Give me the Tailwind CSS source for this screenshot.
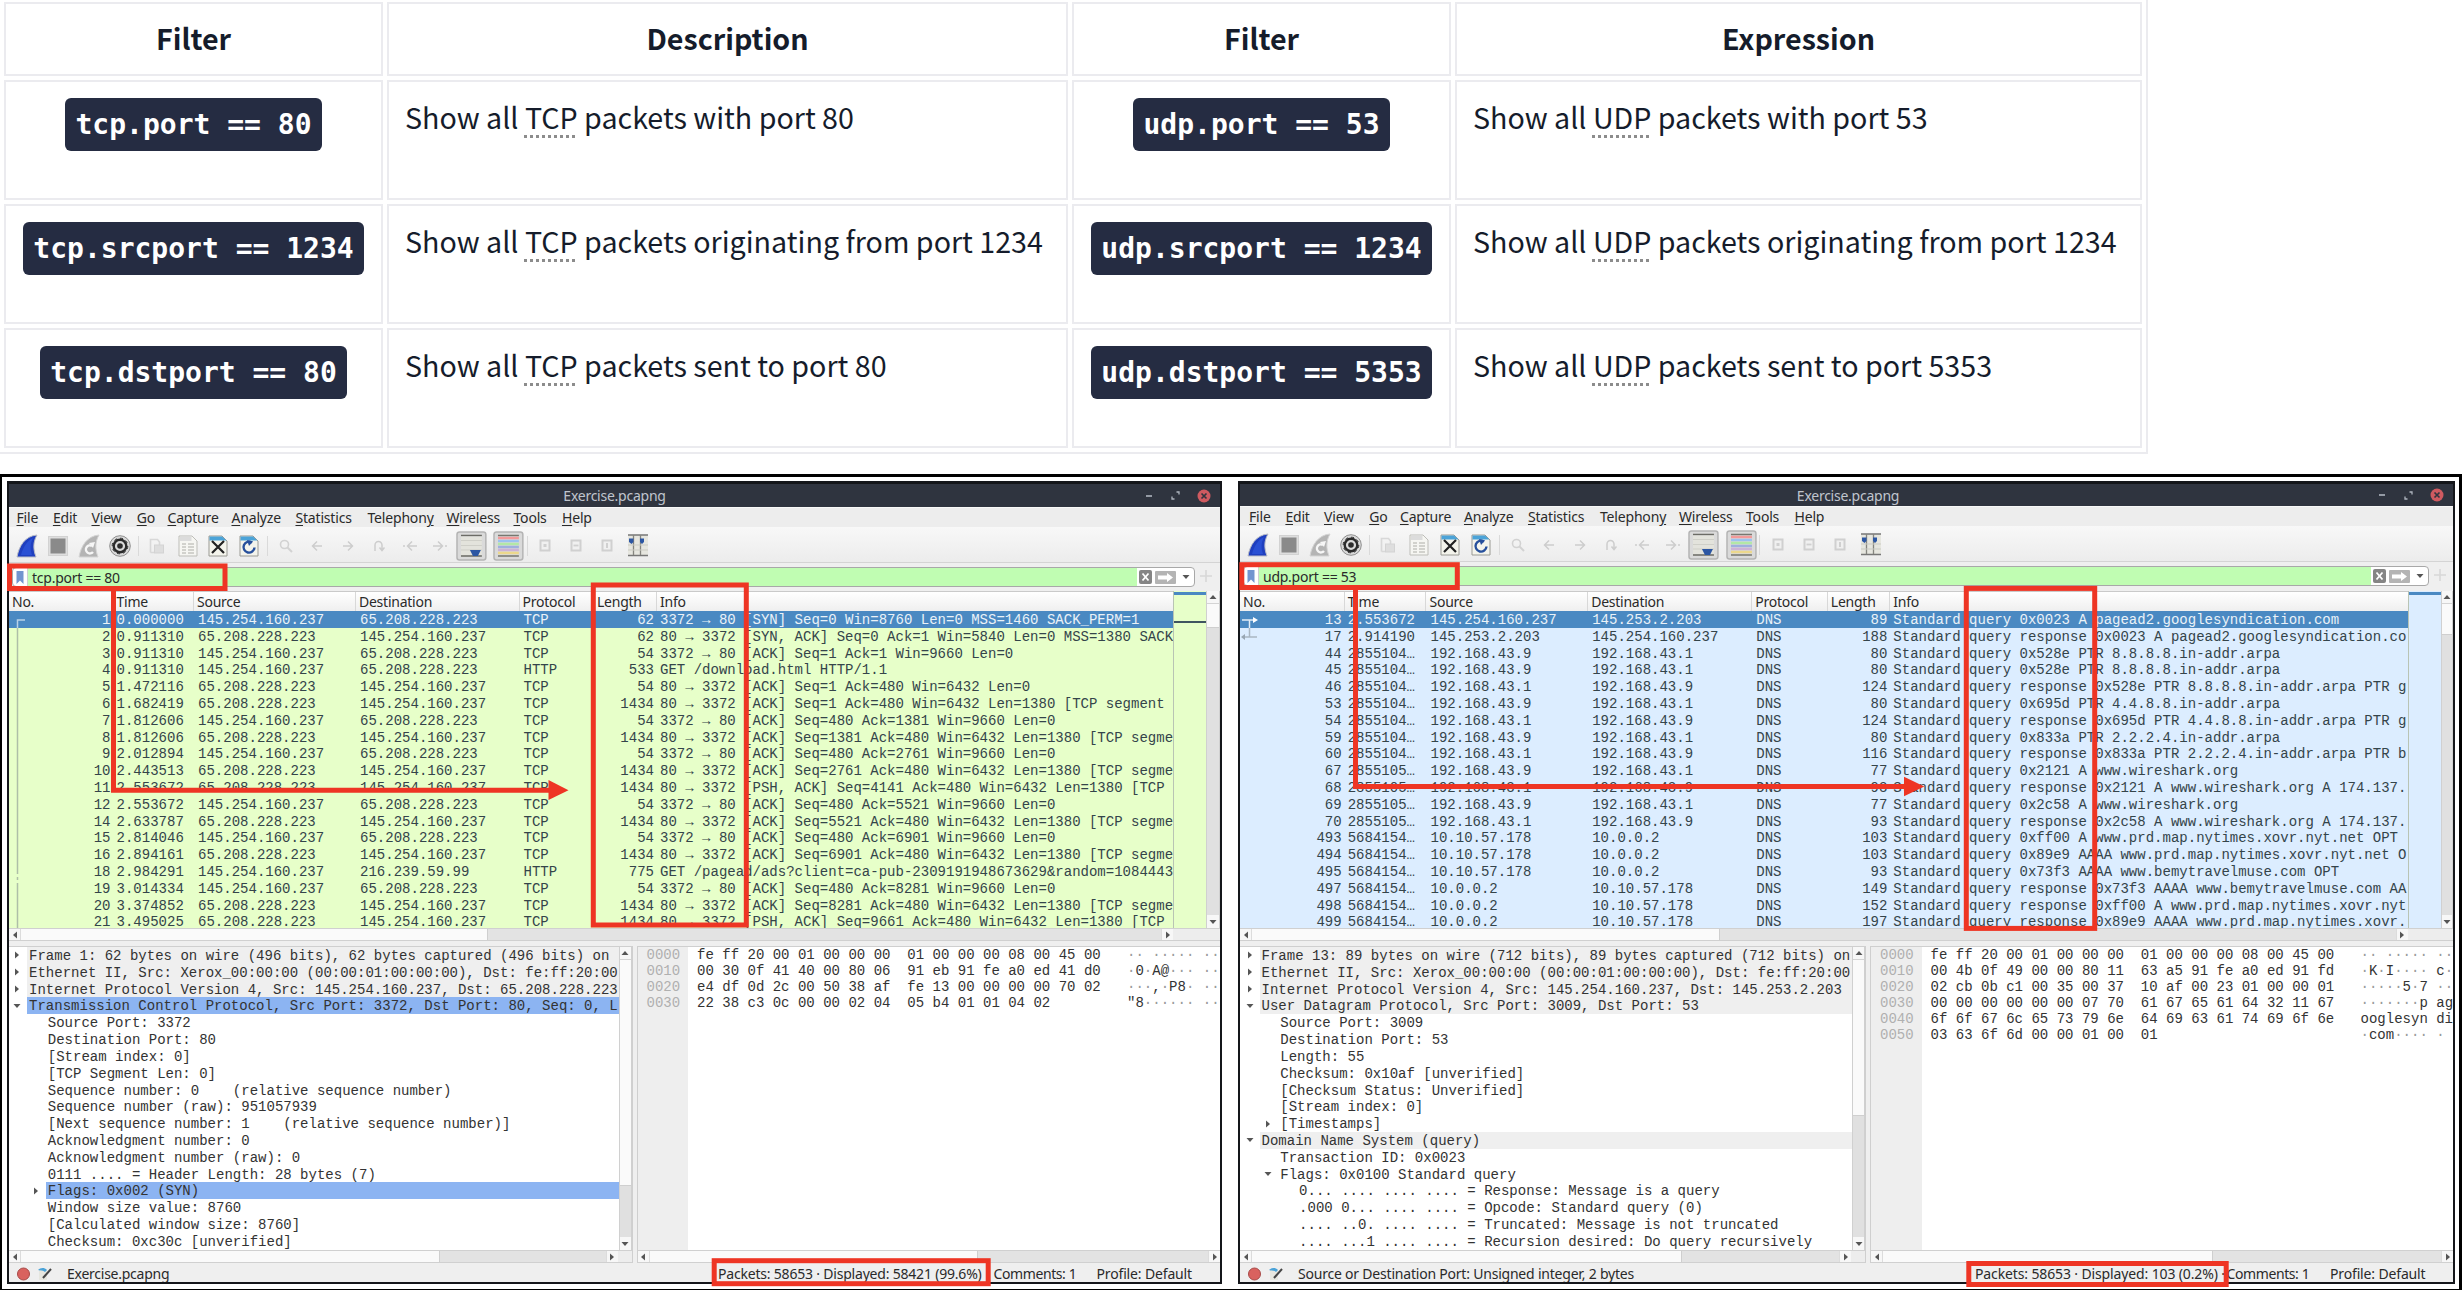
<!DOCTYPE html>
<html lang="en">
<head>
<meta charset="utf-8">
<title>Port filters</title>
<script src="https://cdn.jsdelivr.net/npm/@tailwindcss/browser@4"></script>
</head>
<body class="bg-white overflow-hidden">
<div class="relative w-[2462px] h-[1290px] overflow-hidden">

  <div class="h-[474px]">
    <div id="filters" class="grid grid-cols-[379px_681px_379px_687px] grid-rows-[74px_120px_120px_120px] gap-1 w-[2148px] h-[454px] pl-1 pt-0.5 border-r-2 border-b-2 border-[#ebebef] font-['Noto_Sans_CJK_SC',sans-serif] text-[28.65px] leading-[40px] text-[#151c2b]"></div>
  </div>

  <div id="shots" class="flex gap-4 w-[2462px] h-[816px] pl-[5px] pt-1 bg-white border-black border-t-[3px] border-l-2 border-r-[3px] border-b"></div>

  <svg class="absolute left-0 top-0" width="2462" height="1290" viewBox="0 0 2462 1290" fill="none" stroke="#ee3524" stroke-width="5">
    <rect x="9.5" y="566" width="215.5" height="22.5"/>
    <path d="M113.5 590V790.3H550"/>
    <path d="M548.5 780L568.5 790.2L548.5 800Z" fill="#ee3524" stroke="none"/>
    <rect x="593.3" y="585" width="153" height="340"/>
    <rect x="714.2" y="1260.7" width="274" height="23"/>
    <rect x="1241.8" y="564.7" width="215.5" height="22.8"/>
    <path d="M1355.5 590V786.5H1906"/>
    <path d="M1904 776.7L1924.3 786.5L1904 796.3Z" fill="#ee3524" stroke="none"/>
    <rect x="1966.3" y="588.4" width="128.4" height="340"/>
    <rect x="1968.8" y="1263.5" width="257.4" height="21"/>
  </svg>
</div>

<script>
// ---------- filter table ----------
const codeCell = t => `<div class="border-2 border-[#ebebef] pt-4 flex justify-center items-start"><code class="h-[53px] leading-[53px] px-[10.5px] rounded-md bg-[#252c42] text-white font-bold text-[28px] font-['DejaVu_Sans_Mono',monospace] whitespace-pre">${t}</code></div>`;
const textCell = (p, rest) => `<div class="border-2 border-[#ebebef] px-4 pt-[15px] whitespace-nowrap">Show all <span class="underline decoration-dotted decoration-[3px] decoration-[#8c8c8c] underline-offset-[6px] [text-decoration-skip-ink:none]">${p}</span> packets ${rest}</div>`;
const head = t => `<div class="border-2 border-[#ebebef] flex justify-center font-bold pt-[14px]">${t}</div>`;
document.getElementById('filters').innerHTML =
  ['Filter', 'Description', 'Filter', 'Expression'].map(head).join('') +
  [['tcp.port == 80', 'with port 80', 'udp.port == 53', 'with port 53'],
   ['tcp.srcport == 1234', 'originating from port 1234', 'udp.srcport == 1234', 'originating from port 1234'],
   ['tcp.dstport == 80', 'sent to port 80', 'udp.dstport == 5353', 'sent to port 5353']]
  .map(r => codeCell(r[0]) + textCell('TCP', r[1]) + codeCell(r[2]) + textCell('UDP', r[3])).join('');

// ---------- toolbar icons ----------
const svg = (w, h, body) => `<svg width="${w}" height="${h}" viewBox="0 0 ${w} ${h}" fill="none">${body}</svg>`;
const page = `<path d="M1 1H14L19 6V21H1Z" fill="#f4f4ec" stroke="#9a9a94"/>`;
const icons = {
  fin: svg(22, 24, `<path d="M1 23C3 12 9 2 21 1C17 8 17 15 20 23Z" fill="#1f3fbf" stroke="#b9bcc6"/><path d="M5 21C7 13 11 7 17 4C14 10 14 15 16 21Z" fill="#2a50d4"/>`),
  stop: svg(22, 22, `<rect x="1.5" y="1.5" width="19" height="19" fill="#dedede" stroke="#d2d2d2"/><rect x="3.5" y="3.5" width="15" height="15" fill="#8a8a8a"/>`),
  restart: svg(22, 24, `<path d="M1 23C3 12 9 2 21 1C17 8 17 15 20 23Z" fill="#b4b4b4" stroke="#d4d4d4"/><path d="M14 12A4 4 0 1 0 15 18" stroke="#f6f6f6" stroke-width="2.4"/><path d="M11 9L17 8L15 14Z" fill="#f6f6f6"/>`),
  opts: svg(24, 24, `<circle cx="12" cy="12" r="10.3" fill="#d9d9d9" stroke="#8f8f8f"/><circle cx="12" cy="12" r="6.3" stroke="#2b2b2b" stroke-width="2.4"/><circle cx="12" cy="12" r="7.8" stroke="#2b2b2b" stroke-width="1" stroke-dasharray="3 3.1"/><circle cx="12" cy="12" r="2.8" fill="#2b2b2b"/>`),
  open: svg(16, 18, `<path d="M1.5 15.500V2.500H8.500L10.500 5V8M1.500 15.500H5" stroke="#d8d8d8" stroke-width="1.600"/><rect x="5.500" y="8" width="9" height="8" fill="#dedede" stroke="#d3d3d3"/>`),
  save: svg(20, 22, `<path d="M1 1H14L19 6V21H1Z" fill="#f6f6f2" stroke="#bdbdb8"/><path d="M2 1.500H13.500V6H2Z" fill="#dcdcdc"/><path d="M4 9H8M10 9H16M4 12H8M10 12H16M4 15H8M10 15H16M4 18H8M10 18H16" stroke="#c6c6c1" stroke-width="1.500"/>`),
  close: svg(20, 22, `${page}<path d="M1.500 1.500H14L18.500 5.500H1.500Z" fill="#4ba3d8"/><path d="M4 6L16 18M16 6L4 18" stroke="#222" stroke-width="2.200"/>`),
  reload: svg(20, 22, `${page}<path d="M1.500 1.500H14L18.500 5.500H1.500Z" fill="#4ba3d8"/><path d="M13 7.500A5.500 5.500 0 1 0 15.500 12.500" stroke="#27509c" stroke-width="2.400"/><path d="M8 5L14 6.500L10 11Z" fill="#27509c"/>`),
  find: svg(14, 14, `<circle cx="5.500" cy="5.500" r="4" stroke="#d2d2d2" stroke-width="1.600"/><path d="M8.500 8.500L13 13" stroke="#d2d2d2" stroke-width="2"/>`),
  left: svg(12, 12, `<path d="M11 6H2M6 1.500L1.500 6L6 10.500" stroke="#cdcdcd" stroke-width="1.500"/>`),
  right: svg(12, 12, `<path d="M1 6H10M6 1.500L10.500 6L6 10.500" stroke="#cdcdcd" stroke-width="1.500"/>`),
  goto: svg(12, 12, `<path d="M2 11V5A3.500 3.500 0 0 1 9 5V9M6.500 7.500L9 10.500L11.500 7.500" stroke="#cdcdcd" stroke-width="1.500"/>`),
  first: svg(16, 12, `<path d="M15 6H6M10 1.500L5.500 6L10 10.500M1 6H3" stroke="#cdcdcd" stroke-width="1.500"/>`),
  last: svg(16, 12, `<path d="M1 6H10M6 1.500L10.500 6L6 10.500M13 6H15" stroke="#cdcdcd" stroke-width="1.500"/>`),
  auto: svg(31, 30, `<rect x="1" y="1" width="29" height="28" rx="2.500" fill="#dadada" stroke="#b4b4b4" stroke-width="1.500"/><path d="M5 4.500H26M5 25H26" stroke="#6c6c66" stroke-width="1.500"/><rect x="5" y="5.500" width="21" height="18.500" fill="#e3e3dc"/><path d="M5 9.500H26M5 14.500H26M5 19H26" stroke="#cfcfc8"/><path d="M14 19H25L22 25H17Z" fill="#2c56a3"/>`),
  color: svg(31, 30, `<rect x="1" y="1" width="29" height="28" rx="2.500" fill="#dadada" stroke="#b4b4b4" stroke-width="1.500"/><path d="M5 4.500H26M5 25H26" stroke="#77776f" stroke-width="1.500"/><path d="M5 7H26" stroke="#f39a9a" stroke-width="2.500"/><path d="M5 10H26" stroke="#9cc2f0" stroke-width="2.500"/><path d="M5 13H26" stroke="#b2e8a6" stroke-width="2.500"/><path d="M5 16H26" stroke="#9fb0de" stroke-width="2.500"/><path d="M5 19H26" stroke="#cdb2d7" stroke-width="2.500"/><path d="M5 22H26" stroke="#ecd88c" stroke-width="2.500"/>`),
  zin: svg(12, 13, `<rect x="1.500" y="1.500" width="9" height="10" fill="#f0f0f0" stroke="#d0d0d0" stroke-width="2"/><rect x="4.500" y="5" width="3" height="3" fill="#d0d0d0"/>`),
  zout: svg(12, 13, `<rect x="1.500" y="1.500" width="9" height="10" fill="#f0f0f0" stroke="#d0d0d0" stroke-width="2"/><path d="M3.500 6.500H8.500" stroke="#d0d0d0" stroke-width="1.800"/>`),
  znorm: svg(12, 13, `<rect x="1.500" y="1.500" width="9" height="10" fill="#f0f0f0" stroke="#d0d0d0" stroke-width="2"/><path d="M6 4V9" stroke="#d0d0d0" stroke-width="2"/>`),
  cols: svg(20, 23, `<rect x="0" y="1" width="20" height="21" fill="#e6e6df"/><path d="M0 1H20M0 21.500H20" stroke="#777" stroke-width="1.500"/><path d="M5.500 1V21M12.500 1V21" stroke="#85857f" stroke-width="1.300"/><path d="M0 11H20M0 16H20" stroke="#cbcbc4"/><path d="M1 4.500H5.500V8L3.500 10L1 8ZM12 4.500H16V8L14 10L12 8Z" fill="#2c56a3"/>`)
};
const tool = (n, w) => `<div class="flex items-center justify-center h-full" style="width:${w}px">${icons[n]}</div>`;
const bar = `<div class="w-[6px] h-5 flex justify-center"><div class="w-px h-full bg-[#dadada]"></div></div>`;

// ---------- shared pieces ----------
const tri = d => svg(8, 8, `<path d="${{l: 'M6 0.5V7.5L2 4Z', r: 'M2 0.5V7.5L6 4Z', u: 'M0.500 6H7.500L4 2Z', d: 'M0.500 2H7.500L4 6Z'}[d]}" fill="#555"/>`);
const hscroll = (cls, thumb, tail) => `<div class="flex h-[13px] bg-[#e3e3e3] border-y border-[#d0d0d0] ${cls}"><div class="w-3 bg-[#f7f7f7] border-r border-[#dcdcdc] flex items-center justify-center">${tri('l')}</div><div class="bg-[#fafafa] border-r border-[#cfcfcf]" style="width:${thumb}px"></div><div class="flex-1"></div><div class="w-3 bg-[#f7f7f7] border-l border-[#dcdcdc] flex items-center justify-center">${tri('r')}</div><div class="bg-[#ededed]" style="width:${tail}px"></div></div>`;
const vscroll = thumb => `<div class="flex flex-col flex-1 h-full bg-[#e0e0e0] border-x border-[#d0d0d0]"><div class="h-[13px] bg-[#f7f7f7] border-b border-[#d4d4d4] flex items-center justify-center">${tri('u')}</div><div class="bg-[#fafafa] border-b border-[#cfcfcf]" style="height:${thumb}px"></div><div class="flex-1"></div><div class="h-[13px] bg-[#f7f7f7] flex items-center justify-center">${tri('d')}</div></div>`;
const menu = ['<u>F</u>ile', '<u>E</u>dit', '<u>V</u>iew', '<u>G</u>o', '<u>C</u>apture', '<u>A</u>nalyze', '<u>S</u>tatistics', 'Telephon<u>y</u>', '<u>W</u>ireless', '<u>T</u>ools', '<u>H</u>elp'];

function packetRow(w, r, i) {
  const c = w.cols, sel = i === 0;
  const cell = (k, t, cls) => `<div class="shrink-0 overflow-hidden ${cls}" style="width:${c[k]}px">${t}</div>`;
  return `<div class="flex h-[16.8px] leading-[18px] ${sel ? 'bg-[#4a89c2] text-[#eaf2f8]' : 'text-[#34444a]'}">` +
    cell(0, r[0], 'text-right pr-[3px]') + cell(1, r[1], 'pl-[3px]') + cell(2, r[2], 'pl-1') + cell(3, r[3], 'pl-1') + cell(4, r[4], 'pl-1') +
    cell(5, r[5], 'text-right pr-[3px]') + `<div class="flex-1 overflow-hidden pl-[3px]">${r[6]}</div></div>`;
}
function treeRow([lvl, arrow, text, bg], w) {
  const fill = {g: 'bg-[#efefef]', b: 'bg-[#8cb4f2]', '': ''}[bg || ''];
  return `<div class="flex h-[16.82px] leading-[18.2px]"><div class="shrink-0 flex items-center justify-end pr-1.5" style="width:${w.indent + lvl * 18.8}px">${arrow ? tri(arrow) : ''}</div><div class="flex-1 overflow-hidden pl-0.5 ${fill}">${text}</div></div>`;
}

function wireshark(w) {
  return `<div class="flex flex-col h-[803px] border-[#14161a] border-x-2 border-t-[3px] border-b-2 bg-[#efefef] font-['Noto_Sans',sans-serif] text-[14px] tracking-[-0.25px] text-[#2a2a2a] whitespace-pre overflow-hidden" style="width:${w.width}px">
  <div class="flex items-center shrink-0 bg-[#2f343f] text-[#c0c5ce]" style="height:${w.titleH}px">
    <div class="w-[43px]"></div><div class="flex-1 text-center leading-[20px] pt-px" style="padding-left:${w.titlePad}px">Exercise.pcapng</div>
    <div class="flex items-center justify-between w-[66px] mr-[9px]">
      ${svg(8, 8, '<path d="M1 4H7" stroke="#aeb4be" stroke-width="1.600"/>')}
      ${svg(9, 9, '<path d="M5.500 1H8V3.500M3.500 8H1V5.500" stroke="#aeb4be" stroke-width="1.300"/>')}
      ${svg(14, 14, '<circle cx="7" cy="7" r="6.500" fill="#cf5a60"/><path d="M4.500 4.500L9.500 9.500M9.500 4.500L4.500 9.500" stroke="#33353f" stroke-width="1.700"/>')}
    </div>
  </div>
  <div class="grid grid-cols-[36.4px_38.6px_45.2px_30.800px_64px_64px_72px_79px_67px_48.500px_60px] h-5 shrink-0 leading-[20px] tracking-[-0.180px] bg-[#ededed] border-t border-[#f8f8f8] [&_u]:underline-offset-2" style="padding-left:${w.menuX}px">${menu.map(m => `<div>${m}</div>`).join('')}</div>
  <div class="flex items-center h-9 shrink-0 pl-[3px] pt-[2px] bg-linear-to-b from-[#f8f8f8] to-[#ececec] border-b border-[#d4d4d4]">
    ${['fin', 'stop', 'restart', 'opts'].map(n => tool(n, w.tw)).join('')}${bar}${['open', 'save', 'close', 'reload'].map(n => tool(n, w.tw)).join('')}${bar}${['find', 'left', 'right', 'goto', 'first', 'last'].map(n => tool(n, w.tw)).join('')}${tool('auto', w.tw)}<div class="w-[6.500px]"></div>${tool('color', w.tw)}${bar}${['zin', 'zout', 'znorm', 'cols'].map(n => tool(n, w.tw)).join('')}
  </div>
  <div class="flex items-start shrink-0 pl-[3px] pt-1 bg-[#efefef]" style="height:${w.filterH}px">
    <div class="flex items-center h-5 border border-[#a8a8a8] rounded-sm bg-white overflow-hidden" style="width:${w.fieldW}px">
      <div class="w-[15px] h-full flex items-center justify-center border-r border-[#d0d0d0]">${svg(8, 13, '<path d="M0.500 0H7.500V13L4 9.500L0.500 13Z" fill="#7295cf"/>')}</div>
      <div class="flex-1 h-full bg-[#c0fdb2] pl-1 leading-[19px]">${w.filter}</div>
      <div class="flex items-center gap-[3px] w-[57px] pl-[2px]">
        ${svg(13, 14, '<rect width="13" height="14" rx="2" fill="#858585"/><path d="M3.500 3.500L9.500 10.500M9.500 3.500L3.500 10.500" stroke="#fff" stroke-width="1.800"/>')}
        ${svg(21, 13, '<rect width="21" height="13" rx="1" fill="#b4b4b4"/><path d="M3 4.500H12V2L18 6.500L12 11V8.500H3Z" fill="#fff"/>')}
        <div class="pl-[3px]">${tri('d')}</div>
      </div>
    </div>
    <div class="pl-[5px] pt-[3px]">${svg(12, 12, '<path d="M6 0V12M0 6H12" stroke="#d8d8d8" stroke-width="1.600"/>')}</div>
  </div>
  <div class="flex h-[337px] shrink-0">
    <div class="relative flex flex-col overflow-hidden border-t border-[#cacaca]" style="width:${w.listW}px;background:${w.row}">
      <div class="flex h-[19px] leading-[20px] shrink-0 bg-linear-to-b from-white to-[#efefef]">
        ${['No.', 'Time', 'Source', 'Destination', 'Protocol', 'Length'].map((t, i) => `<div class="shrink-0 pl-[3px] border-r border-[#d8d8d8]" style="width:${w.cols[i]}px">${t}</div>`).join('')}<div class="pl-[3px]">Info</div>
      </div>
      <div class="font-['Liberation_Mono',monospace] text-[14.03px] tracking-normal">${w.packets.map((r, i) => packetRow(w, r, i)).join('')}</div>
      <svg class="absolute left-0 top-[19px]" width="30" height="317" viewBox="0 0 30 317" fill="none">${w.mark}</svg>
    </div>
    <div class="w-[33px] border-l border-[#b9c4b4]" style="background:${w.row}"><div class="h-[3px] mt-px bg-[#4a89c2]"></div>${w.mini}</div>
    ${vscroll(w.listThumb)}
  </div>
  ${hscroll('shrink-0', w.hThumb, w.width - 4 - w.listW)}
  <div class="h-[5px] shrink-0 bg-[#efefef]"></div>
  <div class="flex h-[317px] shrink-0 font-['Liberation_Mono',monospace] text-[14.03px] tracking-normal text-[#333333]">
    <div class="flex flex-col border-t border-r border-[#cfcfcf]" style="width:${w.treeW + 14}px">
      <div class="flex h-[304px] overflow-hidden bg-white">
        <div class="overflow-hidden shrink-0" style="width:${w.treeW}px">${w.tree.map(r => treeRow(r, w)).join('')}</div>
        ${vscroll(w.treeThumb)}
      </div>
      ${hscroll('', w.treeH, 14)}
    </div>
    <div class="w-1"></div>
    <div class="flex flex-col flex-1 min-w-0 border-t border-l border-[#cfcfcf]">
      <div class="flex h-[304px] overflow-hidden bg-white leading-[15.930px]">
        <div class="w-[50.500px] shrink-0 bg-[#eeeeee] text-[#b0b0b0] pl-[9px] pt-px">${w.hex.map((_, i) => `<div>00${i}0</div>`).join('')}</div>
        <div class="w-[439px] shrink-0 pl-[9px] pt-px">${w.hex.map(h => `<div>${h[0]}</div>`).join('')}</div>
        <div class="pt-px">${w.hex.map(h => `<div>${h[1].replace(/·/g, '<span class="text-[#9a9a9a]">·</span>')}</div>`).join('')}</div>
      </div>
      ${hscroll('', w.hexH, 0)}
    </div>
  </div>
  <div class="flex items-center h-[19px] shrink-0 pl-2 pt-[2px] leading-[19px]">
    <svg width="13" height="14" viewBox="0 0 13 14"><circle cx="6.500" cy="7" r="6" fill="#d9625f" stroke="#a84a48"/></svg>
    <svg class="ml-2" width="14" height="14" viewBox="0 0 14 14" fill="none"><path d="M1 3H9V13H1Z" fill="#e6e6df"/><path d="M0 3C2 1 6 0 9 3L7 5C5 3 3 4 0 3Z" fill="#4ba3d8"/><path d="M13 2L5 11" stroke="#444" stroke-width="2"/></svg>
    <div class="ml-[15px]" style="width:${w.s0}px;letter-spacing:${w.sTrack}px">${w.status}</div>
    <div style="width:${w.s1}px;letter-spacing:${w.cTrack}px">${w.count}</div>
    <div class="tracking-[-0.400px]" style="width:${w.s2}px">Comments: 1</div>
    <div class="tracking-[-0.150px]">Profile: Default</div>
  </div>
</div>`;
}

const A = '145.254.160.237', B = '65.208.228.223';
const req = (n, t, len, info) => [n, t, A, B, 'TCP', len, info];
const res = (n, t, len, info) => [n, t, B, A, 'TCP', len, info];
const tcp = {
  width: 1215, titleH: 23, titlePad: 32, menuX: 7.5, filterH: 28, tw: 30.85, fieldW: 1183, filter: 'tcp.port == 80', row: '#e7ffc9', listW: 1164,
  cols: [104.5, 80.5, 162, 163.5, 74.5, 63], listThumb: 24, hThumb: 467, indent: 18, treeW: 609.5, treeThumb: 226, treeH: 419, hexH: 328,
  mini: '<div class="h-[2px] mt-[26px] bg-[#3f5560]"></div>',
  mark: '<path d="M16 9H8.500V17" stroke="#b9d2e8" stroke-width="1.500"/><path d="M8.500 17V260M8.500 274V317" stroke="#aebfa8" stroke-width="1.500"/><path d="M8.500 260V274" stroke="#aebfa8" stroke-width="1.500" stroke-dasharray="3 3"/>',
  packets: [
    req(1, '0.000000', 62, '3372 → 80 [SYN] Seq=0 Win=8760 Len=0 MSS=1460 SACK_PERM=1'),
    res(2, '0.911310', 62, '80 → 3372 [SYN, ACK] Seq=0 Ack=1 Win=5840 Len=0 MSS=1380 SACK'),
    req(3, '0.911310', 54, '3372 → 80 [ACK] Seq=1 Ack=1 Win=9660 Len=0'),
    [4, '0.911310', A, B, 'HTTP', 533, 'GET /download.html HTTP/1.1'],
    res(5, '1.472116', 54, '80 → 3372 [ACK] Seq=1 Ack=480 Win=6432 Len=0'),
    res(6, '1.682419', 1434, '80 → 3372 [ACK] Seq=1 Ack=480 Win=6432 Len=1380 [TCP segment'),
    req(7, '1.812606', 54, '3372 → 80 [ACK] Seq=480 Ack=1381 Win=9660 Len=0'),
    res(8, '1.812606', 1434, '80 → 3372 [ACK] Seq=1381 Ack=480 Win=6432 Len=1380 [TCP segme'),
    req(9, '2.012894', 54, '3372 → 80 [ACK] Seq=480 Ack=2761 Win=9660 Len=0'),
    res(10, '2.443513', 1434, '80 → 3372 [ACK] Seq=2761 Ack=480 Win=6432 Len=1380 [TCP segme'),
    res(11, '2.553672', 1434, '80 → 3372 [PSH, ACK] Seq=4141 Ack=480 Win=6432 Len=1380 [TCP'),
    req(12, '2.553672', 54, '3372 → 80 [ACK] Seq=480 Ack=5521 Win=9660 Len=0'),
    res(14, '2.633787', 1434, '80 → 3372 [ACK] Seq=5521 Ack=480 Win=6432 Len=1380 [TCP segme'),
    req(15, '2.814046', 54, '3372 → 80 [ACK] Seq=480 Ack=6901 Win=9660 Len=0'),
    res(16, '2.894161', 1434, '80 → 3372 [ACK] Seq=6901 Ack=480 Win=6432 Len=1380 [TCP segme'),
    [18, '2.984291', A, '216.239.59.99', 'HTTP', 775, 'GET /pagead/ads?client=ca-pub-2309191948673629&amp;random=1084443'],
    req(19, '3.014334', 54, '3372 → 80 [ACK] Seq=480 Ack=8281 Win=9660 Len=0'),
    res(20, '3.374852', 1434, '80 → 3372 [ACK] Seq=8281 Ack=480 Win=6432 Len=1380 [TCP segme'),
    res(21, '3.495025', 1434, '80 → 3372 [PSH, ACK] Seq=9661 Ack=480 Win=6432 Len=1380 [TCP')
  ],
  tree: [
    [0, 'r', 'Frame 1: 62 bytes on wire (496 bits), 62 bytes captured (496 bits) on', 'g'],
    [0, 'r', 'Ethernet II, Src: Xerox_00:00:00 (00:00:01:00:00:00), Dst: fe:ff:20:00', 'g'],
    [0, 'r', 'Internet Protocol Version 4, Src: 145.254.160.237, Dst: 65.208.228.223', 'g'],
    [0, 'd', 'Transmission Control Protocol, Src Port: 3372, Dst Port: 80, Seq: 0, L', 'b'],
    [1, '', 'Source Port: 3372'], [1, '', 'Destination Port: 80'], [1, '', '[Stream index: 0]'], [1, '', '[TCP Segment Len: 0]'],
    [1, '', 'Sequence number: 0    (relative sequence number)'], [1, '', 'Sequence number (raw): 951057939'],
    [1, '', '[Next sequence number: 1    (relative sequence number)]'], [1, '', 'Acknowledgment number: 0'],
    [1, '', 'Acknowledgment number (raw): 0'], [1, '', '0111 .... = Header Length: 28 bytes (7)'],
    [1, 'r', 'Flags: 0x002 (SYN)', 'b'], [1, '', 'Window size value: 8760'], [1, '', '[Calculated window size: 8760]'], [1, '', 'Checksum: 0xc30c [unverified]']
  ],
  hex: [
    ['fe ff 20 00 01 00 00 00  01 00 00 00 08 00 45 00', '·· ····· ··'],
    ['00 30 0f 41 40 00 80 06  91 eb 91 fe a0 ed 41 d0', '·0·A@··· ··'],
    ['e4 df 0d 2c 00 50 38 af  fe 13 00 00 00 00 70 02', '···,·P8· ··'],
    ['22 38 c3 0c 00 00 02 04  05 b4 01 01 04 02', '"8······ ··']
  ],
  status: 'Exercise.pcapng', sTrack: -0.25, s0: 651, count: 'Packets: 58653 · Displayed: 58421 (99.6%)', cTrack: -0.2, s1: 275.5, s2: 103
};

const Q = '192.168.43.9', R = '192.168.43.1', T = '2855104…', T2 = '2855105…', T3 = '5684154…', C = '10.10.57.178', D = '10.0.0.2';
const udp = {
  width: 1217, titleH: 22, titlePad: 35, menuX: 9, filterH: 29, tw: 30.95, fieldW: 1186, filter: 'udp.port == 53', row: '#dcedff', listW: 1167.5,
  cols: [104.7, 81.8, 161.7, 164.1, 75.6, 62.5], listThumb: 31, hThumb: 468, indent: 19.5, treeW: 612, treeThumb: 156, treeH: 430, hexH: 330,
  mini: '',
  mark: '<path d="M2 9H15M9.500 9V17" stroke="#e3edf6" stroke-width="1.500"/><path d="M13 6L18 9L13 12Z" fill="#fff"/><path d="M9.500 17V26M4 26H17" stroke="#a9b6c2" stroke-width="1.500"/><path d="M5 23L1 26L5 29Z" fill="#98a6b3"/>',
  packets: [
    [13, '2.553672', A, '145.253.2.203', 89, 'query 0x0023 A pagead2.googlesyndication.com'],
    [17, '2.914190', '145.253.2.203', A, 188, 'query response 0x0023 A pagead2.googlesyndication.co'],
    [44, T, Q, R, 80, 'query 0x528e PTR 8.8.8.8.in-addr.arpa'],
    [45, T, Q, R, 80, 'query 0x528e PTR 8.8.8.8.in-addr.arpa'],
    [46, T, R, Q, 124, 'query response 0x528e PTR 8.8.8.8.in-addr.arpa PTR g'],
    [53, T, Q, R, 80, 'query 0x695d PTR 4.4.8.8.in-addr.arpa'],
    [54, T, R, Q, 124, 'query response 0x695d PTR 4.4.8.8.in-addr.arpa PTR g'],
    [59, T, Q, R, 80, 'query 0x833a PTR 2.2.2.4.in-addr.arpa'],
    [60, T, R, Q, 116, 'query response 0x833a PTR 2.2.2.4.in-addr.arpa PTR b'],
    [67, T2, Q, R, 77, 'query 0x2121 A www.wireshark.org'],
    [68, T2, R, Q, 93, 'query response 0x2121 A www.wireshark.org A 174.137.'],
    [69, T2, Q, R, 77, 'query 0x2c58 A www.wireshark.org'],
    [70, T2, R, Q, 93, 'query response 0x2c58 A www.wireshark.org A 174.137.'],
    [493, T3, C, D, 103, 'query 0xff00 A www.prd.map.nytimes.xovr.nyt.net OPT'],
    [494, T3, C, D, 103, 'query 0x89e9 AAAA www.prd.map.nytimes.xovr.nyt.net O'],
    [495, T3, C, D, 93, 'query 0x73f3 AAAA www.bemytravelmuse.com OPT'],
    [497, T3, D, C, 149, 'query response 0x73f3 AAAA www.bemytravelmuse.com AA'],
    [498, T3, D, C, 152, 'query response 0xff00 A www.prd.map.nytimes.xovr.nyt'],
    [499, T3, D, C, 197, 'query response 0x89e9 AAAA www.prd.map.nytimes.xovr.']
  ].map(p => [p[0], p[1], p[2], p[3], 'DNS', p[4], 'Standard ' + p[5]]),
  tree: [
    [0, 'r', 'Frame 13: 89 bytes on wire (712 bits), 89 bytes captured (712 bits) on', 'g'],
    [0, 'r', 'Ethernet II, Src: Xerox_00:00:00 (00:00:01:00:00:00), Dst: fe:ff:20:00', 'g'],
    [0, 'r', 'Internet Protocol Version 4, Src: 145.254.160.237, Dst: 145.253.2.203', 'g'],
    [0, 'd', 'User Datagram Protocol, Src Port: 3009, Dst Port: 53', 'g'],
    [1, '', 'Source Port: 3009'], [1, '', 'Destination Port: 53'], [1, '', 'Length: 55'], [1, '', 'Checksum: 0x10af [unverified]'],
    [1, '', '[Checksum Status: Unverified]'], [1, '', '[Stream index: 0]'], [1, 'r', '[Timestamps]'],
    [0, 'd', 'Domain Name System (query)', 'g'], [1, '', 'Transaction ID: 0x0023'], [1, 'd', 'Flags: 0x0100 Standard query'],
    [2, '', '0... .... .... .... = Response: Message is a query'], [2, '', '.000 0... .... .... = Opcode: Standard query (0)'],
    [2, '', '.... ..0. .... .... = Truncated: Message is not truncated'], [2, '', '.... ...1 .... .... = Recursion desired: Do query recursively']
  ],
  hex: [
    ['fe ff 20 00 01 00 00 00  01 00 00 00 08 00 45 00', '·· ····· ··'],
    ['00 4b 0f 49 00 00 80 11  63 a5 91 fe a0 ed 91 fd', '·K·I···· c·'],
    ['02 cb 0b c1 00 35 00 37  10 af 00 23 01 00 00 01', '·····5·7 ··'],
    ['00 00 00 00 00 00 07 70  61 67 65 61 64 32 11 67', '·······p ag'],
    ['6f 6f 67 6c 65 73 79 6e  64 69 63 61 74 69 6f 6e', 'ooglesyn di'],
    ['03 63 6f 6d 00 00 01 00  01', '·com···· ·']
  ],
  status: 'Source or Destination Port: Unsigned integer, 2 bytes', sTrack: -0.21, s0: 677, count: 'Packets: 58653 · Displayed: 103 (0.2%) ·', cTrack: -0.13, s1: 251.500, s2: 103.5
};
document.getElementById('shots').innerHTML = wireshark(tcp) + wireshark(udp);
</script>
</body>
</html>
